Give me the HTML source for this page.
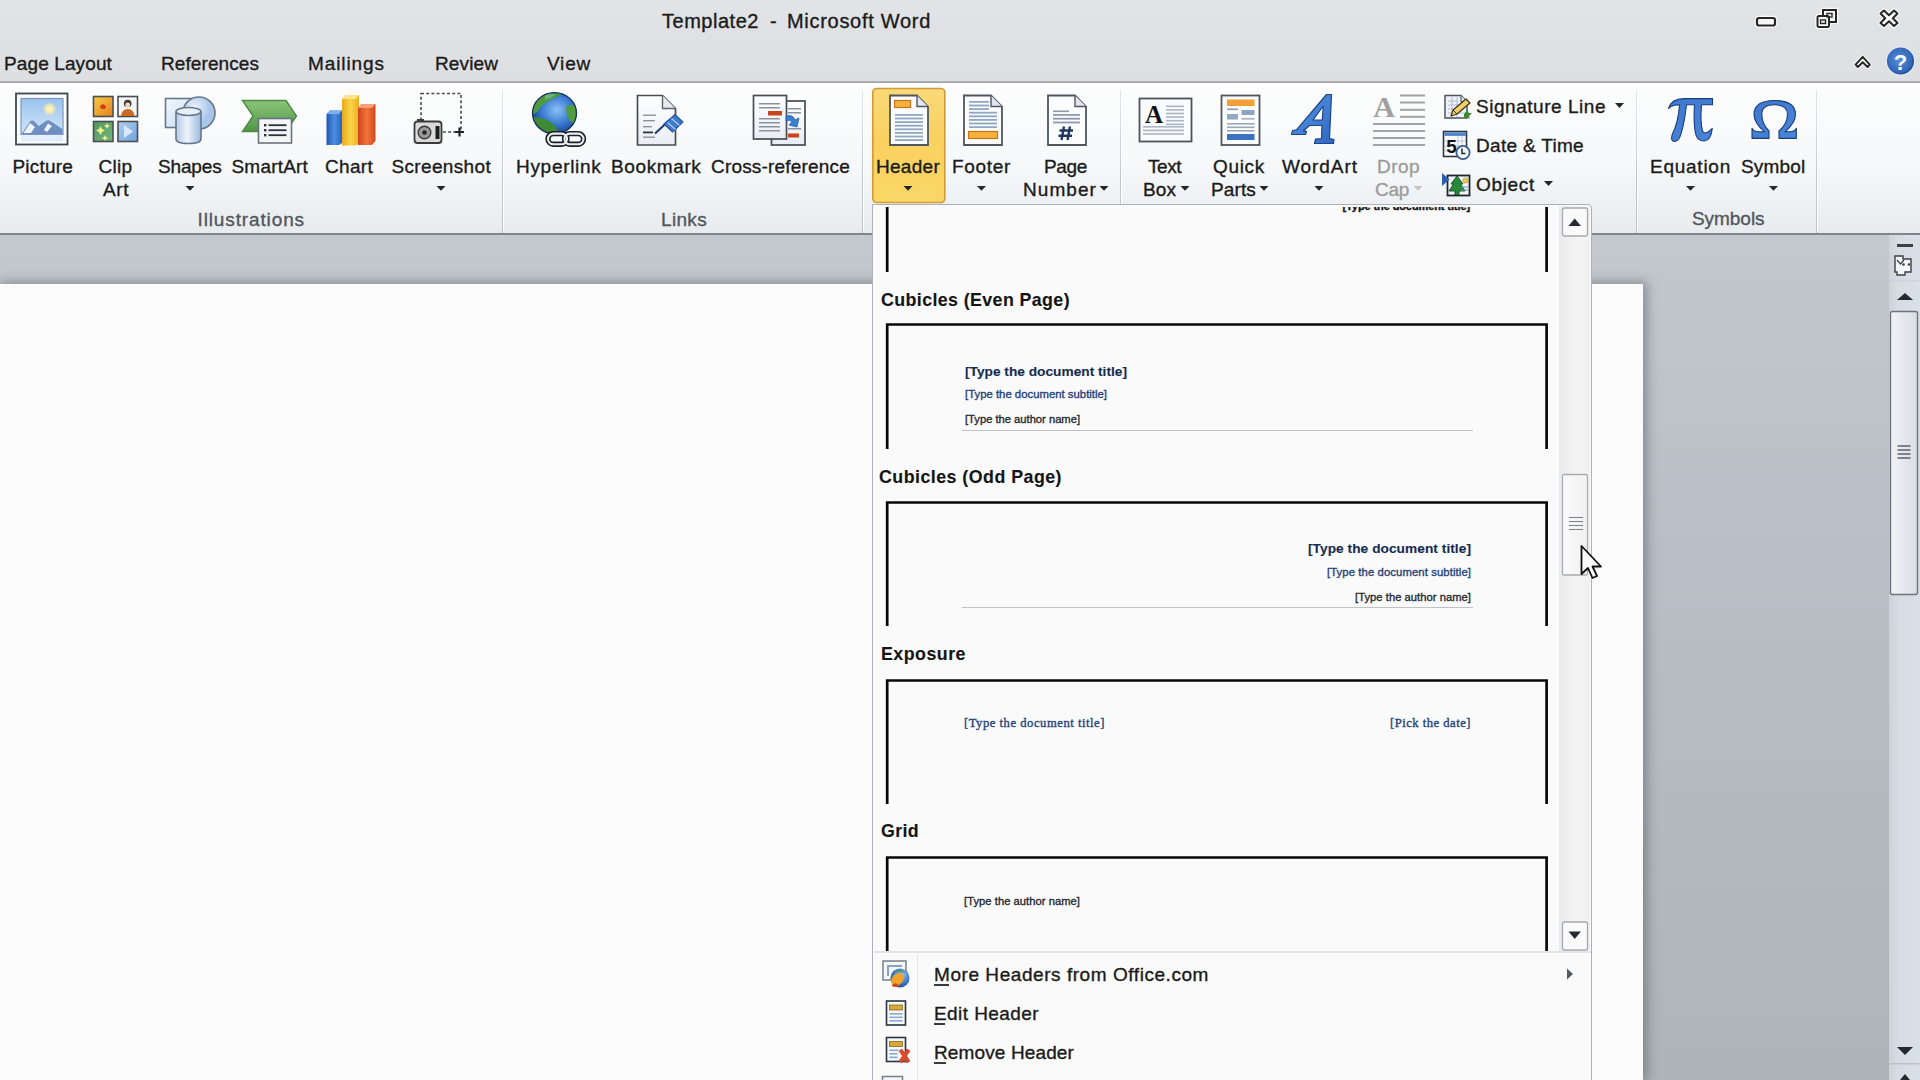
<!DOCTYPE html>
<html><head><meta charset="utf-8"><title>Template2 - Microsoft Word</title>
<style>
html,body{margin:0;padding:0;width:1920px;height:1080px;overflow:hidden;background:#c3c8cf;position:relative}
span{position:absolute;white-space:pre;line-height:1;font-family:"Liberation Sans",sans-serif;-webkit-text-stroke:0.35px currentColor}
svg{position:absolute;overflow:visible}
</style></head><body>
<div id="titlebar" style="position:absolute;left:0;top:0;width:1920px;height:83px;background:linear-gradient(#e2e5e8 0%,#dfe1e4 35%,#dedfe2 100%)"></div>
<div style="position:absolute;left:0;top:81px;width:1920px;height:2px;background:linear-gradient(#b4b8bc,#9a9ea2)"></div>
<div id="ribbon" style="position:absolute;left:0;top:83px;width:1920px;height:151px;background:linear-gradient(#fdfdfd 0%,#f6f8f9 55%,#eef1f4 80%,#e8ebee 100%)"></div>
<div style="position:absolute;left:0;top:233px;width:1920px;height:2px;background:#81868b"></div>
<div id="docbg" style="position:absolute;left:0;top:235px;width:1889px;height:845px;background:linear-gradient(#c3c8cf,#b9bec6 40%,#b3b8bd 75%,#aeb4b7)"></div>
<div id="page" style="position:absolute;left:0;top:284px;width:1643px;height:796px;background:#fbfbfb;box-shadow:2px 0 11px 2px rgba(55,60,65,0.42)"></div>
<div id="vscroll" style="position:absolute;left:1889px;top:235px;width:31px;height:845px;background:linear-gradient(90deg,#cdd3d9,#d6dce3 30%,#dae0e7)"></div>
<div style="position:absolute;left:502px;top:90px;width:1px;height:143px;background:linear-gradient(#e4e7ea,#c3c8cd 60%,#bfc4c9)"></div><div style="position:absolute;left:503px;top:90px;width:1px;height:141px;background:#ffffff"></div><div style="position:absolute;left:862px;top:90px;width:1px;height:143px;background:linear-gradient(#e4e7ea,#c3c8cd 60%,#bfc4c9)"></div><div style="position:absolute;left:863px;top:90px;width:1px;height:141px;background:#ffffff"></div><div style="position:absolute;left:1120px;top:90px;width:1px;height:143px;background:linear-gradient(#e4e7ea,#c3c8cd 60%,#bfc4c9)"></div><div style="position:absolute;left:1121px;top:90px;width:1px;height:141px;background:#ffffff"></div><div style="position:absolute;left:1636px;top:90px;width:1px;height:143px;background:linear-gradient(#e4e7ea,#c3c8cd 60%,#bfc4c9)"></div><div style="position:absolute;left:1637px;top:90px;width:1px;height:141px;background:#ffffff"></div><div style="position:absolute;left:1816px;top:90px;width:1px;height:143px;background:linear-gradient(#e4e7ea,#c3c8cd 60%,#bfc4c9)"></div><div style="position:absolute;left:1817px;top:90px;width:1px;height:141px;background:#ffffff"></div><svg style="left:0;top:0" width="1920" height="240" viewBox="0 0 1920 240">
<defs>
<linearGradient id="gsky" x1="0" y1="0" x2="0" y2="1"><stop offset="0" stop-color="#9ac3ef"/><stop offset="1" stop-color="#d4e6f9"/></linearGradient>
<radialGradient id="gsun"><stop offset="0" stop-color="#fff6c8"/><stop offset="0.5" stop-color="#f6e9a8"/><stop offset="1" stop-color="#f6e9a8" stop-opacity="0"/></radialGradient>
<linearGradient id="gora" x1="0" y1="0" x2="1" y2="1"><stop offset="0" stop-color="#f7cd45"/><stop offset="1" stop-color="#e57f1f"/></linearGradient>
<linearGradient id="ggrn" x1="0" y1="0" x2="1" y2="1"><stop offset="0" stop-color="#4f9a62"/><stop offset="1" stop-color="#78b47e"/></linearGradient>
<linearGradient id="gblt" x1="0" y1="0" x2="1" y2="1"><stop offset="0" stop-color="#aed0f2"/><stop offset="1" stop-color="#6fa2dc"/></linearGradient>
<linearGradient id="gcyl" x1="0" y1="0" x2="1" y2="0"><stop offset="0" stop-color="#b3cbe8"/><stop offset="0.45" stop-color="#eef4fb"/><stop offset="1" stop-color="#9ab8de"/></linearGradient>
<linearGradient id="gsq" x1="0" y1="0" x2="1" y2="1"><stop offset="0" stop-color="#f2f7fd"/><stop offset="1" stop-color="#c5d9f0"/></linearGradient>
<radialGradient id="gcirc" cx="0.35" cy="0.35"><stop offset="0" stop-color="#f0f6fd"/><stop offset="1" stop-color="#a9c6ea"/></radialGradient>
<linearGradient id="gchev" x1="0" y1="0" x2="0" y2="1"><stop offset="0" stop-color="#8cc47a"/><stop offset="1" stop-color="#4f9645"/></linearGradient>
<linearGradient id="gbarb" x1="0" y1="0" x2="1" y2="0"><stop offset="0" stop-color="#1d56b4"/><stop offset="0.5" stop-color="#4d8fe0"/><stop offset="1" stop-color="#2563c2"/></linearGradient>
<linearGradient id="gbary" x1="0" y1="0" x2="1" y2="0"><stop offset="0" stop-color="#e8a91a"/><stop offset="0.5" stop-color="#fbd448"/><stop offset="1" stop-color="#e9ae22"/></linearGradient>
<linearGradient id="gbarr" x1="0" y1="0" x2="1" y2="0"><stop offset="0" stop-color="#d2451b"/><stop offset="0.5" stop-color="#f2733c"/><stop offset="1" stop-color="#cf4a1f"/></linearGradient>
<radialGradient id="gglobe" cx="0.55" cy="0.42" r="0.62"><stop offset="0" stop-color="#8cc0f4"/><stop offset="0.55" stop-color="#3a7bd2"/><stop offset="1" stop-color="#163f85"/></radialGradient>
<linearGradient id="gdoc" x1="0" y1="0" x2="0" y2="1"><stop offset="0" stop-color="#ffffff"/><stop offset="1" stop-color="#e9eef4"/></linearGradient>
<linearGradient id="gbtn" x1="0" y1="0" x2="0" y2="1"><stop offset="0" stop-color="#fad978"/><stop offset="0.45" stop-color="#f9d160"/><stop offset="1" stop-color="#fad766"/></linearGradient>
<linearGradient id="gwa" x1="0" y1="0" x2="1" y2="1"><stop offset="0" stop-color="#5c9be6"/><stop offset="1" stop-color="#2d66c0"/></linearGradient>
<linearGradient id="gsym" x1="0" y1="0" x2="1" y2="1"><stop offset="0" stop-color="#3f76cc"/><stop offset="1" stop-color="#4a85d8"/></linearGradient>
</defs>
<g>
<rect x="16" y="93.5" width="51.5" height="51" fill="#fbfcfe" stroke="#3f4852" stroke-width="1.8"/>
<rect x="21" y="98.5" width="42" height="36" fill="url(#gsky)" stroke="#7d97bd" stroke-width="1.2"/>
<circle cx="49.5" cy="109" r="7" fill="url(#gsun)"/>
<path d="M21.5 134 L30 121.5 Q32 119.5 34.5 121.5 L39 126 L46 121 Q48 119.5 51 121.5 L62.5 129 L62.5 134 Z" fill="#6f8fc2"/>
<path d="M23.5 133 L30 123 L35 127 L31 133 Z M44 130 L48 123.5 L52 126 L47 132 Z" fill="#eef4fc"/>
<rect x="21" y="135.5" width="42" height="6" fill="#e2eefa"/>
</g><g stroke="#4a4f55" stroke-width="1.6">
<rect x="93.5" y="96.5" width="19.5" height="20" fill="url(#gora)"/>
<rect x="118" y="96.5" width="19.5" height="20" fill="#f4f4f2"/>
<rect x="93.5" y="121.5" width="19.5" height="20" fill="url(#ggrn)"/>
<rect x="118" y="121.5" width="19.5" height="20" fill="url(#gblt)"/>
</g>
<path d="M100 106 l3 -2 l3 2 l-1 3 l-4 0 z" fill="#d8391a"/>
<circle cx="127.7" cy="103.5" r="3.8" fill="#3b3b3b"/><circle cx="127.7" cy="105" r="2.4" fill="#f3d9c4"/>
<path d="M121 116 Q122 109 127.7 109 Q133.5 109 134.5 116 Z" fill="#c86a23"/>
<path d="M99 129 l1.5 -3 l1.5 3 l3 1.5 l-3 1.5 l-1.5 3 l-1.5 -3 l-3 -1.5 z M106 125 l1 -2 l1 2 l2 1 l-2 1 l-1 2 l-1 -2 l-2 -1 z M104 137 l1 -2 l1 2 l2 1 l-2 1 l-1 2 l-1 -2 l-2 -1 z" fill="#f6f08a"/>
<path d="M124 125 L133 131.5 L124 138 Z" fill="#e8f2fc" opacity="0.85"/>
<g stroke="#66778c" stroke-width="1.6">
<rect x="165.5" y="98.5" width="34" height="29" fill="url(#gsq)"/>
<circle cx="199" cy="113" r="16" fill="url(#gcirc)"/>
<path d="M176 112 L176 139 Q176 143.5 188.5 143.5 Q201 143.5 201 139 L201 112" fill="url(#gcyl)"/>
<ellipse cx="188.5" cy="111.5" rx="12.5" ry="4" fill="#e7eff9"/>
</g><path d="M242.5 100.5 L286 100.5 L296.5 116 L286 131.5 L242.5 131.5 L253 116 Z" fill="url(#gchev)" stroke="#4c8a43" stroke-width="1.4"/>
<rect x="258.5" y="118.5" width="33" height="24.5" fill="#f3f5f7" stroke="#6b747e" stroke-width="1.6"/>
<g fill="#2d3238"><rect x="264" y="124" width="2.4" height="2.4"/><rect x="264" y="129" width="2.4" height="2.4"/><rect x="264" y="134" width="2.4" height="2.4"/>
<rect x="268.5" y="124.3" width="18" height="1.8"/><rect x="268.5" y="129.3" width="18" height="1.8"/><rect x="268.5" y="134.3" width="18" height="1.8"/></g>
<path d="M326.5 114 L330 110.5 L342 110.5 L342 143 L339 145 L326.5 145 Z" fill="url(#gbarb)"/>
<path d="M326.5 114 L330 110.5 L342 110.5 L339 114 Z" fill="#7fb2ee"/>
<path d="M342 99 L346 95 L359 95 L359 143 L355.5 145.5 L342 145.5 Z" fill="url(#gbary)"/>
<path d="M342 99 L346 95 L359 95 L355.5 99 Z" fill="#fde48a"/>
<path d="M358 108 L361.5 104 L375.5 104 L375.5 141 L372 145 L358 145 Z" fill="url(#gbarr)"/>
<path d="M358 108 L361.5 104 L375.5 104 L372 108 Z" fill="#f7a07a"/>
<rect x="421" y="93.5" width="40" height="38.5" fill="none" stroke="#4b4b4b" stroke-width="1.6" stroke-dasharray="3 2.2"/>
<rect x="414.5" y="121.5" width="27" height="21.5" rx="3" fill="#dadada" stroke="#3a3a3a" stroke-width="1.8"/>
<rect x="417" y="119" width="7" height="3" fill="#3a3a3a"/>
<circle cx="424.5" cy="132.5" r="6.3" fill="#9a9a9a" stroke="#3a3a3a" stroke-width="1.4"/>
<circle cx="424.5" cy="132.5" r="2.3" fill="#262626"/>
<rect x="435.5" y="126" width="4" height="13" fill="#1e1e1e"/>
<path d="M455 132 h9 M459.5 127.5 v9" stroke="#222" stroke-width="2.2"/>
<clipPath id="cglobe"><ellipse cx="554.5" cy="113.2" rx="22" ry="20.6"/></clipPath>
<ellipse cx="554.5" cy="113.2" rx="22" ry="20.6" fill="url(#gglobe)"/>
<g clip-path="url(#cglobe)">
<path d="M530 104 Q536 93 550 91 L566 92 Q556 97 548 101 Q541 105 537 112 L530 116 Z" fill="#4f9b3c"/>
<path d="M545 95 Q551 93 556 95 Q550 98 545 100 Z" fill="#74b98d" opacity="0.8"/>
<path d="M566 107 Q572 103 580 106 L580 124 Q574 124 570 121 Q566 115 566 107 Z" fill="#4f9d3e"/>
<path d="M534 117 Q545 118 552 123 Q558 128 558 136 L530 136 Z" fill="#3f8a35"/>
<path d="M531 113 Q536 128 550 135 L530 136 Z" fill="#14356e" opacity="0.55"/>
</g>
<ellipse cx="554.5" cy="113.2" rx="22" ry="20.6" fill="none" stroke="#14305e" stroke-width="1.3"/>
<g fill="none" stroke="#1c2128" stroke-width="5.4"><rect x="548" y="133.6" width="19" height="10.6" rx="5.3"/><rect x="564.5" y="133.6" width="19" height="10.6" rx="5.3"/></g>
<g fill="none" stroke="#e9eef5" stroke-width="2.1"><rect x="548" y="133.6" width="19" height="10.6" rx="5.3"/><rect x="564.5" y="133.6" width="19" height="10.6" rx="5.3"/></g>
<path d="M637.5 95.5 L662.5 95.5 L675.5 108.5 L675.5 145 L637.5 145 Z" fill="url(#gdoc)" stroke="#474d54" stroke-width="1.7"/>
<path d="M662.5 95.5 L662.5 108.5 L675.5 108.5" fill="#e6ebf1" stroke="#5d646c" stroke-width="1.4"/>
<g fill="#8b949e"><rect x="643" y="114.5" width="13" height="1.4"/><rect x="643" y="120" width="12" height="1.4"/><rect x="643" y="126" width="9" height="1.4"/><rect x="643" y="136.5" width="12" height="1.4"/></g>
<rect x="643" y="131.5" width="10" height="1.8" fill="#2f353d"/>
<path d="M655 133.5 L667 122.5" stroke="#1f3d72" stroke-width="2.1"/>
<path d="M664 124 L675 114.5 L683 122 L672.5 132 Z" fill="#3f7acc" stroke="#22509a" stroke-width="1.1"/>
<path d="M667.5 122.5 L675.5 129.5 M671.5 118.5 L679.5 125.5" stroke="#a9c9f0" stroke-width="1.3"/>
<rect x="771.5" y="101" width="33.5" height="44" fill="url(#gdoc)" stroke="#474d54" stroke-width="1.7"/>
<rect x="753.5" y="95.5" width="33" height="43.5" fill="url(#gdoc)" stroke="#474d54" stroke-width="1.7"/>
<g fill="#8a939d"><rect x="759" y="103" width="21" height="1.5"/><rect x="759" y="107" width="21" height="1.5"/><rect x="759" y="118" width="21" height="1.5"/><rect x="759" y="122" width="21" height="1.5"/><rect x="759" y="126" width="21" height="1.5"/><rect x="759" y="130" width="21" height="1.5"/>
<rect x="788" y="108" width="13" height="1.5"/><rect x="788" y="112" width="13" height="1.5"/><rect x="788" y="128" width="13" height="1.5"/></g>
<rect x="768" y="111" width="14" height="4.5" fill="#c9441c"/>
<rect x="788" y="133.5" width="11" height="4" fill="#c9441c"/>
<path d="M786 116 Q793 114 795 120 L799 118 L797 127 L789 125 L792 122 Q790 119 786 121 Z" fill="#3b7fd4" stroke="#2a5fa8" stroke-width="0.8"/>
<rect x="872.8" y="88.5" width="72" height="114" rx="4" fill="url(#gbtn)" stroke="#cf9d3a" stroke-width="1.7"/><path d="M890 95.5 L917 95.5 L928 106.5 L928 145.0 L890 145.0 Z" fill="#fbfcfd" stroke="#4f565e" stroke-width="1.8"/><path d="M917 95.5 L917 106.5 L928 106.5" fill="#dfe6ee" stroke="#4f565e" stroke-width="1.4"/><rect x="894.5" y="100.5" width="16" height="7" fill="#f5b23c" stroke="#c9731a" stroke-width="1.2"/><g fill="#8fa7c4"><rect x="895" y="114.0" width="28" height="1.8"/><rect x="895" y="117.6" width="28" height="1.8"/><rect x="895" y="121.2" width="28" height="1.8"/><rect x="895" y="124.8" width="28" height="1.8"/><rect x="895" y="128.4" width="28" height="1.8"/><rect x="895" y="132.0" width="28" height="1.8"/><rect x="895" y="135.6" width="28" height="1.8"/><rect x="895" y="139.2" width="28" height="1.8"/></g><path d="M964 95.5 L991 95.5 L1002 106.5 L1002 145.0 L964 145.0 Z" fill="#fbfcfd" stroke="#4f565e" stroke-width="1.8"/><path d="M991 95.5 L991 106.5 L1002 106.5" fill="#dfe6ee" stroke="#4f565e" stroke-width="1.4"/><g fill="#8fa7c4"><rect x="969" y="101.0" width="20" height="1.8"/><rect x="969" y="104.6" width="20" height="1.8"/><rect x="969" y="108.2" width="20" height="1.8"/><rect x="969" y="111.8" width="28" height="1.8"/><rect x="969" y="115.4" width="28" height="1.8"/><rect x="969" y="119.0" width="28" height="1.8"/><rect x="969" y="122.6" width="28" height="1.8"/><rect x="969" y="126.2" width="28" height="1.8"/></g><rect x="968.5" y="131.5" width="29" height="7" fill="#f5b23c" stroke="#c9731a" stroke-width="1.2"/><path d="M1048 95.5 L1075 95.5 L1086 106.5 L1086 145.0 L1048 145.0 Z" fill="#fbfcfd" stroke="#4f565e" stroke-width="1.8"/><path d="M1075 95.5 L1075 106.5 L1086 106.5" fill="#dfe6ee" stroke="#4f565e" stroke-width="1.4"/><g fill="#8c9aac"><rect x="1053" y="110.5" width="16" height="1.6"/><rect x="1053" y="114" width="27" height="1.8"/><rect x="1053" y="117.8" width="27" height="1.8"/><rect x="1053" y="121.6" width="27" height="1.8"/></g><path d="M1064 126.5 L1061.5 140 M1070 126.5 L1067.5 140 M1059.5 130.5 H1073 M1058.5 135.8 H1072" stroke="#1f3760" stroke-width="2.4" fill="none"/><rect x="1139.5" y="98.5" width="52" height="43" fill="#fafbfc" stroke="#505459" stroke-width="1.8"/>
<text x="1154" y="122.5" font-family="Liberation Serif" font-weight="700" font-size="25" fill="#111" text-anchor="middle">A</text><g fill="#a9b6c6"><rect x="1166" y="105.5" width="18" height="1.6"/><rect x="1166" y="109.1" width="18" height="1.6"/><rect x="1166" y="112.7" width="18" height="1.6"/><rect x="1166" y="116.3" width="18" height="1.6"/><rect x="1166" y="119.9" width="18" height="1.6"/><rect x="1166" y="123.5" width="18" height="1.6"/><rect x="1143" y="126.0" width="41" height="1.6"/><rect x="1143" y="129.6" width="41" height="1.6"/><rect x="1143" y="133.2" width="41" height="1.6"/></g><rect x="1221.5" y="95.5" width="38" height="49.5" fill="#fbfcfd" stroke="#4f565e" stroke-width="1.8"/>
<rect x="1227" y="99.5" width="27.5" height="6.5" fill="#f1a033"/>
<rect x="1227" y="108.5" width="11" height="1.6" fill="#8e9aab"/><rect x="1241.5" y="110" width="13" height="5" fill="#8ea6c2"/>
<rect x="1227" y="114" width="11" height="5.5" fill="#95a9c0"/><rect x="1241.5" y="118" width="13" height="1.6" fill="#a3b0c0"/>
<g fill="#9aa8b8"><rect x="1227" y="123" width="27.5" height="1.6"/><rect x="1227" y="126.5" width="27.5" height="1.6"/><rect x="1227" y="130" width="27.5" height="1.6"/></g>
<rect x="1227" y="134" width="27.5" height="6" fill="#3a73c4"/>
<path d="M1326.5 94.5 L1331.5 94.5 L1329.5 138.5 L1334 139.5 L1333.5 143.5 L1314.5 143.5 L1315.5 139.2 L1321.5 138.5 L1322 125.5 L1309.5 125.5 L1303.5 130.8 L1306.5 131.3 L1305.5 134.5 L1291.5 134.5 L1292.5 130.5 L1296.5 129.8 Z M1322.3 120 L1323.3 106 L1313 120 Z" fill="url(#gwa)" fill-rule="evenodd" stroke="#1d4688" stroke-width="1.2" stroke-linejoin="round"/><text x="1384" y="116.5" font-family="Liberation Serif" font-weight="700" font-size="30" fill="#a0a0a0" text-anchor="middle">A</text>
<g fill="#a3a3a3"><rect x="1400" y="94.5" width="25" height="2"/><rect x="1400" y="101.5" width="25" height="2"/><rect x="1400" y="108.8" width="25" height="2"/><rect x="1400" y="115.8" width="25" height="2"/>
<rect x="1373" y="123" width="52" height="2"/><rect x="1373" y="130" width="52" height="2"/><rect x="1373" y="137" width="52" height="2"/><rect x="1373" y="144" width="52" height="2"/></g>
<path d="M1445 95.5 L1461 95.5 L1467 101.5 L1467 118 L1445 118 Z" fill="#eef2f7" stroke="#4f565e" stroke-width="1.5"/>
<path d="M1461 95.5 V101.5 H1467" fill="#dfe5ec" stroke="#4f565e" stroke-width="1.1"/>
<g stroke="#aebcd0" stroke-width="1"><path d="M1448 101 h10 M1448 105 h16 M1448 109 h16 M1448 113 h16 M1452 97 v20 M1457 97 v20"/></g>
<path d="M1451 116 L1453 110 L1466 99 L1470 103 L1457 114 Z" fill="#f0cf6a" stroke="#3d3316" stroke-width="1.2" stroke-linejoin="round"/>
<path d="M1453 110 L1457 114" stroke="#3d3316" stroke-width="1"/>
<path d="M1464 114 l3 -4 l2 3 l3 0 l-3 3 l1 3 l-3 -2 l-3 1 z" fill="#3b8a2e"/>
<rect x="1443.5" y="131.5" width="23" height="25" fill="#f8fafc" stroke="#2f3640" stroke-width="1.6"/>
<rect x="1444.3" y="132.3" width="21.5" height="3.6" fill="#4f86cc"/>
<g stroke="#b7c3d2" stroke-width="0.9"><path d="M1444.5 141 h21 M1444.5 146 h21 M1444.5 151 h21 M1458 136 v20 M1462 136 v20"/></g>
<text x="1451.5" y="153" font-family="Liberation Sans" font-weight="700" font-size="19" fill="#151515" text-anchor="middle">5</text>
<circle cx="1463" cy="152.5" r="6.6" fill="#f2f6fb" stroke="#3a5d8c" stroke-width="1.8"/>
<path d="M1462 148.5 v5 h3.5" stroke="#1f2a3c" stroke-width="1.5" fill="none"/>
<rect x="1447.5" y="175.5" width="22" height="20" fill="#f0f3f7" stroke="#1e2630" stroke-width="1.8"/>
<path d="M1442 173 L1449.5 179.5 L1442 186 Z" fill="#2a5db0"/>
<path d="M1457 176 L1451 184 L1453.5 184 L1449 191 L1455 191 L1455 195 L1459 195 L1459 191 L1465 191 L1460.5 184 L1463 184 Z" fill="#27893a" stroke="#134d1c" stroke-width="0.9"/>
<circle cx="1465.5" cy="180.5" r="2.6" fill="#f2c84a" stroke="#a88a20" stroke-width="0.6"/>
<g stroke="#6d8fc0" stroke-width="1"><path d="M1461 187 h7 M1461 190 h7"/></g>
<path d="M1668.5 108.5 Q1671.5 98.6 1684 98.6 L1712.5 98.6 L1712.5 104.8 L1701.5 104.8 Q1700 122 1702.5 131 Q1705 136 1712.3 128.3 Q1711 140.5 1704.5 141 Q1696.5 141.5 1695 131 Q1693.5 120 1694.5 104.8 L1686.5 104.8 Q1684.5 122 1681.5 132 Q1679.5 141.5 1674.5 141.5 Q1670.5 141.5 1672 135 Q1678.5 122 1679.5 104.8 Q1672 104.8 1668.5 108.5 Z" fill="url(#gsym)" stroke="#163d7c" stroke-width="1.1" stroke-linejoin="round"/><path d="M1752 138.4 L1752 128.3 Q1754 131.8 1759 131.8 L1764.5 131.8 Q1754 123 1754 114 Q1754.5 100.5 1774.5 100.5 Q1795 100.5 1795.5 114 Q1795.5 123 1785 131.8 L1790 131.8 Q1795 131.8 1796.3 128.3 L1796.3 138.4 L1779 138.4 L1779 131 Q1787.5 124 1787.5 114 Q1787 104.8 1774.5 104.8 Q1762 104.8 1761.8 114 Q1761.8 124 1769 131 L1769 138.4 Z" fill="url(#gsym)" stroke="#163d7c" stroke-width="1.1" stroke-linejoin="round"/><path d="M185.5 186.0 L194.5 186.0 L190 190.8 Z" fill="#262626"/><path d="M436.5 186.0 L445.5 186.0 L441 190.8 Z" fill="#262626"/><path d="M903.5 186.0 L912.5 186.0 L908 190.8 Z" fill="#262626"/><path d="M977.0 186.0 L986.0 186.0 L981.5 190.8 Z" fill="#262626"/><path d="M1099.5 186.0 L1108.5 186.0 L1104 190.8 Z" fill="#262626"/><path d="M1180.5 186.0 L1189.5 186.0 L1185 190.8 Z" fill="#262626"/><path d="M1259.5 186.0 L1268.5 186.0 L1264 190.8 Z" fill="#262626"/><path d="M1314.5 186.0 L1323.5 186.0 L1319 190.8 Z" fill="#262626"/><path d="M1615.0 103.1 L1624.0 103.1 L1619.5 107.9 Z" fill="#262626"/><path d="M1544.0 181.1 L1553.0 181.1 L1548.5 185.9 Z" fill="#262626"/><path d="M1686.0 186.0 L1695.0 186.0 L1690.5 190.8 Z" fill="#262626"/><path d="M1769.0 186.0 L1778.0 186.0 L1773.5 190.8 Z" fill="#262626"/><path d="M1413.5 186.0 L1422.5 186.0 L1418 190.8 Z" fill="#c4c4c4"/><rect x="1757" y="18" width="18" height="7.5" rx="2" fill="none" stroke="#ffffff" stroke-width="4.5" opacity="0.9"/>
<rect x="1757" y="18" width="18" height="7.5" rx="2" fill="#f6f6f6" stroke="#262626" stroke-width="2.2"/>
<path d="M1862.7 56.8 L1869.8 64.6 L1867.6 67 L1862.7 62.2 L1857.8 67 L1855.6 64.6 Z" fill="#ffffff" stroke="#ffffff" stroke-width="4" stroke-linejoin="round" opacity="0.8"/>
<path d="M1862.7 56.8 L1869.8 64.6 L1867.6 67 L1862.7 62.2 L1857.8 67 L1855.6 64.6 Z" fill="#ffffff" stroke="#2a2a2a" stroke-width="2" stroke-linejoin="round"/>
<g fill="none" stroke="#ffffff" stroke-width="4.4"><rect x="1817.5" y="16" width="11.5" height="11" rx="1.5"/><path d="M1823 16 v-6 h13 v11.5 h-7"/></g>
<g fill="none" stroke="#262626" stroke-width="2"><rect x="1817.5" y="16" width="11.5" height="11" rx="1.5"/><path d="M1823 15.5 v-5.5 h13 v12 h-6.5"/><rect x="1820.5" y="20" width="5" height="3.5" stroke-width="1.3"/><rect x="1827" y="13.5" width="5" height="3.5" stroke-width="1.3"/></g>
<path d="M1880.5 13.5 L1884 10.5 L1889 15.2 L1894 10.5 L1897.5 13.5 L1892.8 18.2 L1897.5 23 L1894 26 L1889 21.3 L1884 26 L1880.5 23 L1885.2 18.2 Z" fill="#fdfdfd" stroke="#ffffff" stroke-width="4.5" stroke-linejoin="round" opacity="0.8"/><path d="M1880.5 13.5 L1884 10.5 L1889 15.2 L1894 10.5 L1897.5 13.5 L1892.8 18.2 L1897.5 23 L1894 26 L1889 21.3 L1884 26 L1880.5 23 L1885.2 18.2 Z" fill="#fdfdfd" stroke="#262626" stroke-width="2" stroke-linejoin="round"/>
<radialGradient id="ghelp" cx="0.45" cy="0.45" r="0.6"><stop offset="0" stop-color="#5a8fd8"/><stop offset="0.75" stop-color="#3468b8"/><stop offset="1" stop-color="#1d4791"/></radialGradient>
<circle cx="1900.5" cy="61" r="14.8" fill="#e3ecf7"/>
<circle cx="1900.5" cy="61" r="13.6" fill="url(#ghelp)"/>
<text x="1900.5" y="69.5" font-family="Liberation Sans" font-weight="700" font-size="22" fill="#ffffff" text-anchor="middle">?</text>
</svg><div id="dd" style="position:absolute;left:872px;top:204px;width:720px;height:880px;background:#fafafa;border:1px solid #aeb2b6;border-radius:0 4px 0 0;box-sizing:border-box"></div>
<div style="position:absolute;left:1559px;top:206px;width:31px;height:746px;background:linear-gradient(90deg,#eaeaea,#f5f5f5 60%,#f0f0f0)"></div>
<div style="position:absolute;left:874px;top:951px;width:717px;height:2px;background:#e2e4e7"></div>
<div style="position:absolute;left:917px;top:954px;width:1px;height:126px;background:#e3e5e8"></div>
<svg style="left:0;top:0" width="1920" height="1080"><path d="M887.2 207 V272 M1546.6 207 V272" fill="none" stroke="#080808" stroke-width="2.7"/></svg><div style="position:absolute;left:1330px;top:206.5px;width:160px;height:12px;overflow:hidden"><span style="left:12.5px;top:-6px;font-size:11px;font-weight:700;color:#111;letter-spacing:-0.1px">[Type the document title]</span></div><svg style="left:0;top:0" width="1920" height="1080"><path d="M887.2 449 V324.5 H1546.6 V449" fill="none" stroke="#080808" stroke-width="2.7" stroke-linejoin="miter"/></svg><svg style="left:0;top:0" width="1920" height="1080"><path d="M887.2 626 V502.5 H1546.6 V626" fill="none" stroke="#080808" stroke-width="2.7" stroke-linejoin="miter"/></svg><svg style="left:0;top:0" width="1920" height="1080"><path d="M887.2 804 V680.5 H1546.6 V804" fill="none" stroke="#080808" stroke-width="2.7" stroke-linejoin="miter"/></svg><svg style="left:0;top:0" width="1920" height="1080"><path d="M887.2 951 V857.5 H1546.6 V951" fill="none" stroke="#080808" stroke-width="2.7" stroke-linejoin="miter"/></svg><div style="position:absolute;left:962px;top:430px;width:511px;height:1px;background:#bfc3c7"></div><div style="position:absolute;left:962px;top:607px;width:511px;height:1px;background:#bfc3c7"></div><div style="position:absolute;left:934px;top:984.3px;width:15px;height:1.6px;background:#3a3a3a"></div><div style="position:absolute;left:934px;top:1023.3px;width:11px;height:1.6px;background:#3a3a3a"></div><div style="position:absolute;left:934px;top:1062.3px;width:12px;height:1.6px;background:#3a3a3a"></div>
<span style="left:662.0px;top:10.57px;font-size:20px;font-weight:400;color:#1b1b1b;letter-spacing:0.524px;font-family:'Liberation Sans';">Template2</span><span style="left:770.0px;top:10.57px;font-size:20px;font-weight:400;color:#1b1b1b;letter-spacing:0.328px;font-family:'Liberation Sans';">-</span><span style="left:787.0px;top:10.57px;font-size:20px;font-weight:400;color:#1b1b1b;letter-spacing:0.706px;font-family:'Liberation Sans';">Microsoft Word</span><span style="left:4.0px;top:53.92px;font-size:19px;font-weight:400;color:#1b1b1b;letter-spacing:0.118px;font-family:'Liberation Sans';">Page Layout</span><span style="left:161.0px;top:53.92px;font-size:19px;font-weight:400;color:#1b1b1b;letter-spacing:0.083px;font-family:'Liberation Sans';">References</span><span style="left:308.0px;top:53.92px;font-size:19px;font-weight:400;color:#1b1b1b;letter-spacing:0.912px;font-family:'Liberation Sans';">Mailings</span><span style="left:435.0px;top:53.92px;font-size:19px;font-weight:400;color:#1b1b1b;letter-spacing:0.115px;font-family:'Liberation Sans';">Review</span><span style="left:547.0px;top:53.92px;font-size:19px;font-weight:400;color:#1b1b1b;letter-spacing:0.789px;font-family:'Liberation Sans';">View</span><span style="left:12.5px;top:156.92px;font-size:19px;font-weight:400;color:#1b1b1b;letter-spacing:0.194px;font-family:'Liberation Sans';">Picture</span><span style="left:98.5px;top:156.92px;font-size:19px;font-weight:400;color:#1b1b1b;letter-spacing:0.316px;font-family:'Liberation Sans';">Clip</span><span style="left:103.0px;top:179.52px;font-size:19px;font-weight:400;color:#1b1b1b;letter-spacing:0.573px;font-family:'Liberation Sans';">Art</span><span style="left:158.0px;top:156.92px;font-size:19px;font-weight:400;color:#1b1b1b;letter-spacing:-0.159px;font-family:'Liberation Sans';">Shapes</span><span style="left:231.5px;top:156.92px;font-size:19px;font-weight:400;color:#1b1b1b;letter-spacing:0.193px;font-family:'Liberation Sans';">SmartArt</span><span style="left:325.0px;top:156.92px;font-size:19px;font-weight:400;color:#1b1b1b;letter-spacing:0.306px;font-family:'Liberation Sans';">Chart</span><span style="left:391.5px;top:156.92px;font-size:19px;font-weight:400;color:#1b1b1b;letter-spacing:0.338px;font-family:'Liberation Sans';">Screenshot</span><span style="left:516.0px;top:156.92px;font-size:19px;font-weight:400;color:#1b1b1b;letter-spacing:0.700px;font-family:'Liberation Sans';">Hyperlink</span><span style="left:611.0px;top:156.92px;font-size:19px;font-weight:400;color:#1b1b1b;letter-spacing:0.621px;font-family:'Liberation Sans';">Bookmark</span><span style="left:711.0px;top:156.92px;font-size:19px;font-weight:400;color:#1b1b1b;letter-spacing:0.185px;font-family:'Liberation Sans';">Cross-reference</span><span style="left:876.0px;top:156.92px;font-size:19px;font-weight:400;color:#1b1b1b;letter-spacing:0.279px;font-family:'Liberation Sans';">Header</span><span style="left:952.0px;top:156.92px;font-size:19px;font-weight:400;color:#1b1b1b;letter-spacing:0.680px;font-family:'Liberation Sans';">Footer</span><span style="left:1044.0px;top:156.92px;font-size:19px;font-weight:400;color:#1b1b1b;letter-spacing:-0.344px;font-family:'Liberation Sans';">Page</span><span style="left:1023.0px;top:179.52px;font-size:19px;font-weight:400;color:#1b1b1b;letter-spacing:1.070px;font-family:'Liberation Sans';">Number</span><span style="left:1148.0px;top:156.92px;font-size:19px;font-weight:400;color:#1b1b1b;letter-spacing:-0.465px;font-family:'Liberation Sans';">Text</span><span style="left:1143.0px;top:179.52px;font-size:19px;font-weight:400;color:#1b1b1b;letter-spacing:0.083px;font-family:'Liberation Sans';">Box</span><span style="left:1213.0px;top:156.92px;font-size:19px;font-weight:400;color:#1b1b1b;letter-spacing:0.684px;font-family:'Liberation Sans';">Quick</span><span style="left:1211.0px;top:179.52px;font-size:19px;font-weight:400;color:#1b1b1b;letter-spacing:0.128px;font-family:'Liberation Sans';">Parts</span><span style="left:1282.0px;top:156.92px;font-size:19px;font-weight:400;color:#1b1b1b;letter-spacing:0.951px;font-family:'Liberation Sans';">WordArt</span><span style="left:1377.0px;top:156.92px;font-size:19px;font-weight:400;color:#9c9c9c;letter-spacing:0.453px;font-family:'Liberation Sans';">Drop</span><span style="left:1375.0px;top:179.52px;font-size:19px;font-weight:400;color:#9c9c9c;letter-spacing:-0.286px;font-family:'Liberation Sans';">Cap</span><span style="left:1476.0px;top:96.92px;font-size:19px;font-weight:400;color:#1b1b1b;letter-spacing:0.532px;font-family:'Liberation Sans';">Signature Line</span><span style="left:1476.0px;top:135.92px;font-size:19px;font-weight:400;color:#1b1b1b;letter-spacing:0.314px;font-family:'Liberation Sans';">Date &amp; Time</span><span style="left:1476.0px;top:174.92px;font-size:19px;font-weight:400;color:#1b1b1b;letter-spacing:0.680px;font-family:'Liberation Sans';">Object</span><span style="left:1650.0px;top:156.92px;font-size:19px;font-weight:400;color:#1b1b1b;letter-spacing:0.748px;font-family:'Liberation Sans';">Equation</span><span style="left:1741.0px;top:156.92px;font-size:19px;font-weight:400;color:#1b1b1b;letter-spacing:0.190px;font-family:'Liberation Sans';">Symbol</span><span style="left:197.5px;top:209.92px;font-size:19px;font-weight:400;color:#50565c;letter-spacing:0.876px;font-family:'Liberation Sans';">Illustrations</span><span style="left:661.0px;top:209.92px;font-size:19px;font-weight:400;color:#50565c;letter-spacing:0.328px;font-family:'Liberation Sans';">Links</span><span style="left:1692.0px;top:209.42px;font-size:19px;font-weight:400;color:#50565c;letter-spacing:-0.051px;font-family:'Liberation Sans';">Symbols</span><span style="left:881.0px;top:291.63px;font-size:17.8px;font-weight:700;color:#141414;letter-spacing:0.408px;font-family:'Liberation Sans';-webkit-text-stroke:0.1px currentColor;">Cubicles (Even Page)</span><span style="left:879.0px;top:468.93px;font-size:17.8px;font-weight:700;color:#141414;letter-spacing:0.479px;font-family:'Liberation Sans';-webkit-text-stroke:0.1px currentColor;">Cubicles (Odd Page)</span><span style="left:881.0px;top:645.93px;font-size:17.8px;font-weight:700;color:#141414;letter-spacing:0.494px;font-family:'Liberation Sans';-webkit-text-stroke:0.1px currentColor;">Exposure</span><span style="left:881.0px;top:822.93px;font-size:17.8px;font-weight:700;color:#141414;letter-spacing:0.359px;font-family:'Liberation Sans';-webkit-text-stroke:0.1px currentColor;">Grid</span><span style="left:965.0px;top:365.40px;font-size:13.7px;font-weight:700;color:#152c50;letter-spacing:0.011px;font-family:'Liberation Sans';-webkit-text-stroke:0.1px currentColor;">[Type the document title]</span><span style="left:965.0px;top:389.43px;font-size:11.3px;font-weight:400;color:#24427a;letter-spacing:0.025px;font-family:'Liberation Sans';">[Type the document subtitle]</span><span style="left:965.0px;top:413.52px;font-size:11.2px;font-weight:400;color:#262a30;letter-spacing:-0.003px;font-family:'Liberation Sans';">[Type the author name]</span><span style="left:1308.0px;top:542.40px;font-size:13.7px;font-weight:700;color:#152c50;letter-spacing:0.051px;font-family:'Liberation Sans';-webkit-text-stroke:0.1px currentColor;">[Type the document title]</span><span style="left:1327.0px;top:567.43px;font-size:11.3px;font-weight:400;color:#24427a;letter-spacing:0.097px;font-family:'Liberation Sans';">[Type the document subtitle]</span><span style="left:1355.0px;top:591.52px;font-size:11.2px;font-weight:400;color:#262a30;letter-spacing:0.043px;font-family:'Liberation Sans';">[Type the author name]</span><span style="left:964.0px;top:717.45px;font-size:12.6px;font-weight:400;color:#24427a;letter-spacing:0.541px;font-family:'Liberation Serif';">[Type the document title]</span><span style="left:1390.0px;top:717.45px;font-size:12.6px;font-weight:400;color:#24427a;letter-spacing:0.504px;font-family:'Liberation Serif';">[Pick the date]</span><span style="left:964.0px;top:895.52px;font-size:11.2px;font-weight:400;color:#262a30;letter-spacing:0.043px;font-family:'Liberation Sans';">[Type the author name]</span><span style="left:934.0px;top:964.92px;font-size:19px;font-weight:400;color:#1b1b1b;letter-spacing:0.557px;font-family:'Liberation Sans';">More Headers from Office.com</span><span style="left:934.0px;top:1003.62px;font-size:19px;font-weight:400;color:#1b1b1b;letter-spacing:0.423px;font-family:'Liberation Sans';">Edit Header</span><span style="left:934.0px;top:1042.52px;font-size:19px;font-weight:400;color:#1b1b1b;letter-spacing:0.127px;font-family:'Liberation Sans';">Remove Header</span>
<svg style="left:0;top:0" width="1920" height="1080" viewBox="0 0 1920 1080">
<defs>
<linearGradient id="gthumb" x1="0" y1="0" x2="1" y2="0"><stop offset="0" stop-color="#fbfbfb"/><stop offset="1" stop-color="#f0f0f0"/></linearGradient>
<linearGradient id="gthumb2" x1="0" y1="0" x2="1" y2="0"><stop offset="0" stop-color="#f2f4f7"/><stop offset="0.5" stop-color="#e4e8ee"/><stop offset="1" stop-color="#d9dee5"/></linearGradient>
<radialGradient id="gglob2" cx="0.6" cy="0.35" r="0.7"><stop offset="0" stop-color="#9cc7ef"/><stop offset="0.6" stop-color="#3f78c6"/><stop offset="1" stop-color="#1f4d92"/></radialGradient>
</defs>
<rect x="1562.5" y="208" width="25" height="28" rx="2" fill="#fafafa" stroke="#a5a9ae" stroke-width="1.3"/>
<path d="M1568.5 226 L1581 226 L1574.7 218.5 Z" fill="#222a33"/>
<rect x="1562.5" y="922" width="25" height="28" rx="2" fill="#fafafa" stroke="#a5a9ae" stroke-width="1.3"/>
<path d="M1568.5 931.5 L1581 931.5 L1574.7 939 Z" fill="#222a33"/>
<rect x="1562.5" y="474.5" width="25" height="100.5" rx="1.5" fill="url(#gthumb)" stroke="#a9adb1" stroke-width="1.3"/>
<g stroke="#7d8186" stroke-width="1.2"><path d="M1569 517.5 h14 M1569 521.5 h14 M1569 525.5 h14 M1569 529.5 h14"/></g>
<path d="M1567 968.5 L1573 974 L1567 979.5 Z" fill="#55595e"/>
<rect x="883" y="961" width="23" height="19" fill="#f3f6fa" stroke="#77808a" stroke-width="1.5"/>
<rect x="887" y="965" width="15" height="2" fill="#8aa0bb"/><rect x="887" y="965" width="2" height="11" fill="#8aa0bb"/>
<circle cx="900" cy="978" r="9.5" fill="url(#gglob2)"/>
<path d="M891 981 Q893 972 901 973 Q905 976 903 981 Q899 987 893 986 Z" fill="#f0a42a"/>
<path d="M892 985 Q896 981 899 986 Q896 988 892 986 Z" fill="#d2461f"/>
<path d="M896 970 Q901 969 904 972 Q900 973 896 970 Z" fill="#4e9c4a"/>
<rect x="886.5" y="1001" width="19" height="24" fill="#f5f8fc" stroke="#2b3440" stroke-width="1.6"/>
<rect x="889.5" y="1005" width="13" height="5" fill="#d7a73a" stroke="#8a6a1a" stroke-width="0.8"/>
<g fill="#8ea8cc"><rect x="889.5" y="1013" width="13" height="1.6"/><rect x="889.5" y="1016.5" width="13" height="1.6"/><rect x="889.5" y="1020" width="13" height="1.6"/></g>
<rect x="886.5" y="1037.5" width="19" height="24" fill="#f5f8fc" stroke="#2b3440" stroke-width="1.6"/>
<rect x="889.5" y="1041.5" width="13" height="5" fill="#d7a73a" stroke="#8a6a1a" stroke-width="0.8"/>
<g fill="#8ea8cc"><rect x="889.5" y="1049.5" width="9" height="1.6"/><rect x="889.5" y="1053" width="8" height="1.6"/><rect x="889.5" y="1056.5" width="8" height="1.6"/></g>
<path d="M899 1051 L902 1049 L904.5 1053 L907 1049 L910 1051 L906.5 1056 L910 1061 L907 1063 L904.5 1059 L902 1063 L899 1061 L902.5 1056 Z" fill="#e04a24" stroke="#b3321a" stroke-width="0.6"/>
<rect x="882.5" y="1076.5" width="20" height="10" fill="#f3f6fa" stroke="#77808a" stroke-width="1.5"/>
<path d="M1581.5 546 L1581.5 574 L1588 568 L1592.5 578 L1597 576 L1592.5 566.5 L1601 566.5 Z" fill="#ffffff" stroke="#111" stroke-width="1.8" stroke-linejoin="round"/><rect x="1897" y="244" width="16" height="3" fill="#3c3f43"/>
<path d="M1895 256 h8 v3 h8 v13 h-6 v3 h-8 v-3 h-2 Z" fill="#f4f6f8" stroke="#3c3f43" stroke-width="1.4"/>
<circle cx="1903.5" cy="264.5" r="1.3" fill="#3c3f43"/><circle cx="1909" cy="264.5" r="1.3" fill="#3c3f43"/>
<path d="M1897 260 L1900.5 264 L1904 260" fill="none" stroke="#3c3f43" stroke-width="1.2"/>
<rect x="1889" y="280.5" width="31" height="1" fill="#c7ccd2"/>
<path d="M1897 300 L1913 300 L1905 293 Z" fill="#25292e"/>
<rect x="1890.5" y="311.5" width="27" height="283" rx="2" fill="url(#gthumb2)" stroke="#6e747b" stroke-width="1.4"/>
<g stroke="#5c6168" stroke-width="1.3"><path d="M1897.5 446 h13 M1897.5 450 h13 M1897.5 454 h13 M1897.5 458 h13"/></g>
<path d="M1897 1047 L1913 1047 L1905 1055 Z" fill="#25292e"/>
<rect x="1889" y="1063" width="31" height="1.5" fill="#bcc2c9"/>
<path d="M1900 1080 L1905 1074 L1910 1080 Z M1903.5 1078 h3 v3 h-3 Z" fill="#25292e"/>
</svg>
</body></html>
